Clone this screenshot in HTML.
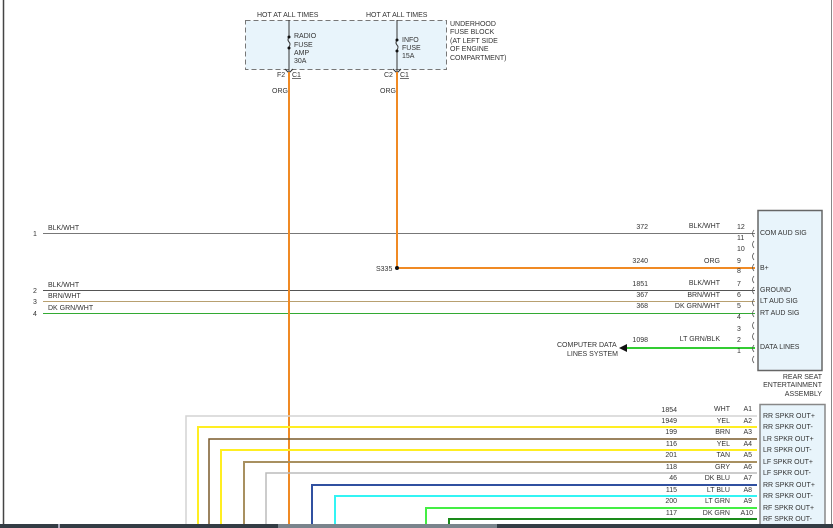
<!DOCTYPE html>
<html><head><meta charset="utf-8"><style>
html,body{margin:0;padding:0;background:#fff;width:833px;height:528px;overflow:hidden}
svg{display:block}
text{font-family:"Liberation Sans",sans-serif;font-size:7px;fill:#333}
</style></head><body>
<svg width="833" height="528" viewBox="0 0 833 528" xmlns="http://www.w3.org/2000/svg">
<rect x="0" y="0" width="833" height="528" fill="#fff"/>
<line x1="3.5" y1="0" x2="3.5" y2="528" stroke="#444" stroke-width="1.5"/>
<line x1="831.5" y1="0" x2="831.5" y2="528" stroke="#888" stroke-width="1"/>
<!-- fuse block -->
<rect x="245.5" y="20.5" width="201" height="49" fill="#e8f4fb" stroke="#777" stroke-dasharray="5,3"/>
<text x="257" y="17">HOT AT ALL TIMES</text>
<text x="366" y="17">HOT AT ALL TIMES</text>
<text x="450" y="26">UNDERHOOD</text>
<text x="450" y="34">FUSE BLOCK</text>
<text x="450" y="43">(AT LEFT SIDE</text>
<text x="450" y="51">OF ENGINE</text>
<text x="450" y="60">COMPARTMENT)</text>
<g stroke="#333" stroke-width="1" fill="none">
<line x1="289" y1="20" x2="289" y2="37"/><path d="M289 37 q-2 3 0 5 q2 2 0 5"/><line x1="289" y1="48" x2="289" y2="72"/>
<line x1="397" y1="20" x2="397" y2="40"/><path d="M397 40 q-2 3 0 5 q2 2 0 5"/><line x1="397" y1="51" x2="397" y2="72"/>
<path d="M285 69 l4 4 l4 -4"/><path d="M393 69 l4 4 l4 -4"/>
</g>
<circle cx="289" cy="37" r="1.5" fill="#111"/><circle cx="289" cy="48" r="1.5" fill="#111"/>
<circle cx="397" cy="40" r="1.5" fill="#111"/><circle cx="397" cy="51" r="1.5" fill="#111"/>
<text x="294" y="38">RADIO</text><text x="294" y="47">FUSE</text><text x="294" y="55">AMP</text><text x="294" y="63">30A</text>
<text x="402" y="42">INFO</text><text x="402" y="50">FUSE</text><text x="402" y="58">15A</text>
<text x="277" y="77">F2</text><text x="292" y="77" text-decoration="underline">C1</text>
<text x="384" y="77">C2</text><text x="400" y="77" text-decoration="underline">C1</text>
<text x="272" y="93">ORG</text><text x="380" y="93">ORG</text>
<!-- horizontal wires -->
<line x1="43" y1="233.5" x2="755" y2="233.5" stroke="#777"/>
<line x1="43" y1="290.5" x2="755" y2="290.5" stroke="#555"/>
<line x1="43" y1="301.5" x2="755" y2="301.5" stroke="#b8a070"/>
<line x1="43" y1="313.5" x2="755" y2="313.5" stroke="#3a3"/>
<text x="33" y="236">1</text><text x="33" y="293">2</text><text x="33" y="304">3</text><text x="33" y="316">4</text>
<text x="48" y="230">BLK/WHT</text><text x="48" y="287">BLK/WHT</text><text x="48" y="298">BRN/WHT</text><text x="48" y="310">DK GRN/WHT</text>
<!-- orange wires -->
<line x1="289" y1="72" x2="289" y2="528" stroke="#f08a24" stroke-width="2"/>
<polyline points="397,72 397,268 755,268" fill="none" stroke="#f08a24" stroke-width="2"/>
<circle cx="397" cy="268" r="2" fill="#111"/>
<text x="376" y="271">S335</text>
<!-- green data -->
<line x1="626" y1="348" x2="755" y2="348" stroke="#3c3" stroke-width="2"/>
<polygon points="619,348 627,344 627,352" fill="#111"/>
<text x="557" y="347">COMPUTER DATA</text><text x="567" y="356">LINES SYSTEM</text>
<!-- labels upper -->
<g text-anchor="end">
<text x="648" y="229">372</text><text x="720" y="228">BLK/WHT</text>
<text x="648" y="263">3240</text><text x="720" y="263">ORG</text>
<text x="648" y="286">1851</text><text x="720" y="285">BLK/WHT</text>
<text x="648" y="297">367</text><text x="720" y="297">BRN/WHT</text>
<text x="648" y="308">368</text><text x="720" y="308">DK GRN/WHT</text>
<text x="648" y="342">1098</text><text x="720" y="341">LT GRN/BLK</text>
</g>
<g>
<text x="737" y="229">12</text><text x="737" y="240">11</text><text x="737" y="251">10</text><text x="737" y="263">9</text>
<text x="737" y="273">8</text><text x="737" y="286">7</text><text x="737" y="297">6</text><text x="737" y="308">5</text>
<text x="737" y="319">4</text><text x="737" y="331">3</text><text x="737" y="342">2</text><text x="737" y="353">1</text>
</g>
<g fill="none" stroke="#555" stroke-width="0.8">
<path d="M754 230 q-3 3.5 0 7"/><path d="M754 241 q-3 3.5 0 7"/><path d="M754 253 q-3 3.5 0 7"/><path d="M754 264 q-3 3.5 0 7"/>
<path d="M754 276 q-3 3.5 0 7"/><path d="M754 287 q-3 3.5 0 7"/><path d="M754 299 q-3 3.5 0 7"/><path d="M754 310 q-3 3.5 0 7"/>
<path d="M754 322 q-3 3.5 0 7"/><path d="M754 333 q-3 3.5 0 7"/><path d="M754 345 q-3 3.5 0 7"/><path d="M754 356 q-3 3.5 0 7"/>
</g>
<rect x="758" y="210.5" width="64" height="160" fill="#e8f4fb" stroke="#666" stroke-width="1.5"/>
<text x="760" y="235">COM AUD SIG</text><text x="760" y="270">B+</text><text x="760" y="292">GROUND</text>
<text x="760" y="303">LT AUD SIG</text><text x="760" y="315">RT AUD SIG</text><text x="760" y="349">DATA LINES</text>
<g text-anchor="end"><text x="822" y="379">REAR SEAT</text><text x="822" y="387">ENTERTAINMENT</text><text x="822" y="396">ASSEMBLY</text></g>
<!-- speaker wires -->
<g fill="none" stroke-width="2">
<polyline points="186,528 186,416 757,416" stroke="#d4d4d4" stroke-width="1.5"/>
<polyline points="198,528 198,427 757,427" stroke="#ffee22"/>
<polyline points="209,528 209,439 757,439" stroke="#7a5a2a" stroke-width="1.5"/>
<polyline points="221,528 221,450 757,450" stroke="#ffee22"/>
<polyline points="244,528 244,462 757,462" stroke="#a89060"/>
<polyline points="266,528 266,473 757,473" stroke="#bbb" stroke-width="1.5"/>
<polyline points="312,528 312,485 757,485" stroke="#3050a0"/>
<polyline points="335,528 335,496 757,496" stroke="#33f4f4"/>
<polyline points="426,528 426,508 757,508" stroke="#44ee44"/>
<polyline points="449,528 449,519 757,519" stroke="#1a8a1a"/>
</g>
<g text-anchor="end">
<text x="677" y="412">1854</text><text x="730" y="411">WHT</text><text x="752" y="411">A1</text>
<text x="677" y="423">1949</text><text x="730" y="423">YEL</text><text x="752" y="423">A2</text>
<text x="677" y="434">199</text><text x="730" y="434">BRN</text><text x="752" y="434">A3</text>
<text x="677" y="446">116</text><text x="730" y="446">YEL</text><text x="752" y="446">A4</text>
<text x="677" y="457">201</text><text x="730" y="457">TAN</text><text x="752" y="457">A5</text>
<text x="677" y="469">118</text><text x="730" y="469">GRY</text><text x="752" y="469">A6</text>
<text x="677" y="480">46</text><text x="730" y="480">DK BLU</text><text x="752" y="480">A7</text>
<text x="677" y="492">115</text><text x="730" y="492">LT BLU</text><text x="752" y="492">A8</text>
<text x="677" y="503">200</text><text x="730" y="503">LT GRN</text><text x="752" y="503">A9</text>
<text x="677" y="515">117</text><text x="730" y="515">DK GRN</text><text x="753" y="515">A10</text>
</g>
<rect x="760" y="404.5" width="65" height="130" fill="#e8f4fb" stroke="#888" stroke-width="1.5"/>
<g>
<text x="763" y="418">RR SPKR OUT+</text><text x="763" y="429">RR SPKR OUT-</text><text x="763" y="441">LR SPKR OUT+</text>
<text x="763" y="452">LR SPKR OUT-</text><text x="763" y="464">LF SPKR OUT+</text><text x="763" y="475">LF SPKR OUT-</text>
<text x="763" y="487">RR SPKR OUT+</text><text x="763" y="498">RR SPKR OUT-</text><text x="763" y="510">RF SPKR OUT+</text>
<text x="763" y="521">RF SPKR OUT-</text>
</g>
<!-- bottom bar -->
<rect x="0" y="524" width="833" height="4" fill="#333c44"/>
<rect x="58" y="524" width="2" height="4" fill="#aab"/>
<rect x="278" y="524" width="219" height="4" fill="#7a848c"/>
</svg>
</body></html>
